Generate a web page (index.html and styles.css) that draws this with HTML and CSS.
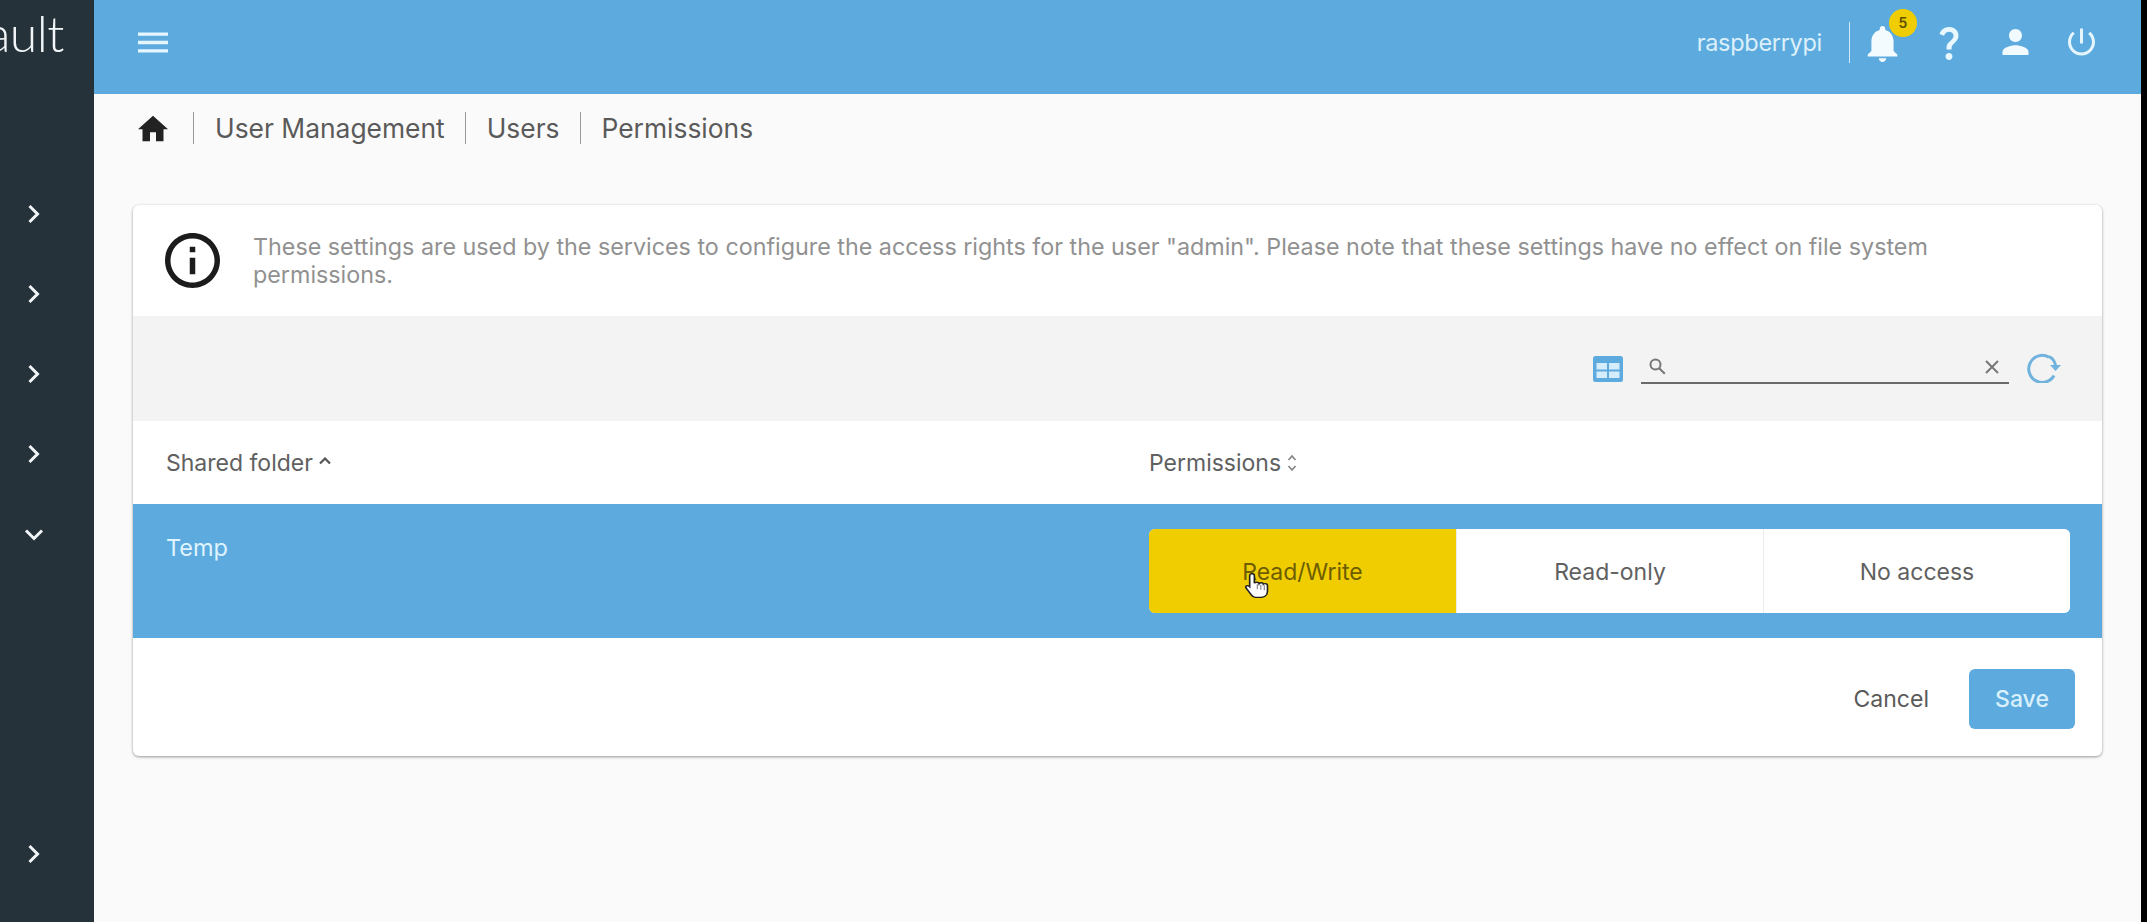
FILE: index.html
```html
<!DOCTYPE html>
<html lang="en">
<head>
<meta charset="utf-8">
<title>User Management | Users | Permissions</title>
<link rel="stylesheet" href="styles.css">
</head>
<body>
<div class="app">
  <aside class="sidebar">
    <div class="logo"><span class="logo-text">ault</span></div>
    <nav class="nav">
      <a class="nav-item"><svg class="chev" viewBox="0 0 14 22"><path d="M3 3l8 8-8 8"/></svg></a>
      <a class="nav-item"><svg class="chev" viewBox="0 0 14 22"><path d="M3 3l8 8-8 8"/></svg></a>
      <a class="nav-item"><svg class="chev" viewBox="0 0 14 22"><path d="M3 3l8 8-8 8"/></svg></a>
      <a class="nav-item"><svg class="chev" viewBox="0 0 14 22"><path d="M3 3l8 8-8 8"/></svg></a>
      <a class="nav-item"><svg class="chev-down" viewBox="0 0 22 14"><path d="M3 3l8 8 8-8"/></svg></a>
    </nav>
    <a class="nav-item nav-bottom"><svg class="chev" viewBox="0 0 14 22"><path d="M3 3l8 8-8 8"/></svg></a>
  </aside>
  <main class="main">
    <header class="topbar">
      <svg class="icon-menu" viewBox="3 6 18 12"><path d="M3 18h18v-2H3v2zm0-5h18v-2H3v2zm0-7v2h18V6H3z"/></svg>
      <div class="top-right">
        <span class="host">raspberrypi</span>
        <span class="top-sep"></span>
        <span class="bell">
          <svg class="icon-bell" viewBox="4 2.5 16 19.5"><path d="M12 22c1.1 0 2-.9 2-2h-4c0 1.1.89 2 2 2zm6-6v-5c0-3.07-1.64-5.64-4.5-6.32V4c0-.83-.67-1.5-1.5-1.5s-1.5.67-1.5 1.5v.68C7.63 5.36 6 7.92 6 11v5l-2 2v1h16v-1l-2-2z"/></svg>
          <span class="badge">5</span>
        </span>
        <svg class="icon-help" viewBox="6.5 3 11 19"><path d="M11.07 12.85c.77-1.39 2.25-2.21 3.11-3.44.91-1.29.4-3.7-2.18-3.7-1.69 0-2.52 1.28-2.87 2.34L6.54 6.96C7.25 4.83 9.18 3 11.99 3c2.35 0 3.96 1.07 4.78 2.41.7 1.15 1.11 3.3.03 4.9-1.2 1.77-2.35 2.31-2.97 3.45-.25.46-.35.76-.35 2.24h-2.89c-.01-.78-.13-2.05.48-3.15zM14 20c0 1.1-.9 2-2 2s-2-.9-2-2 .9-2 2-2 2 .9 2 2z"/></svg>
        <svg class="icon-user" viewBox="4 4 16 16"><path d="M12 12c2.21 0 4-1.79 4-4s-1.79-4-4-4-4 1.79-4 4 1.79 4 4 4zm0 2c-2.67 0-8 1.34-8 4v2h16v-2c0-2.66-5.33-4-8-4z"/></svg>
        <svg class="icon-power" viewBox="3 3 18 18"><path d="M13 3h-2v10h2V3zm4.83 2.17l-1.42 1.42C17.99 7.86 19 9.81 19 12c0 3.87-3.13 7-7 7s-7-3.13-7-7c0-2.19 1.01-4.14 2.58-5.42L6.17 5.17C4.23 6.82 3 9.26 3 12c0 4.97 4.03 9 9 9s9-4.03 9-9c0-2.74-1.23-5.18-3.17-6.83z"/></svg>
      </div>
    </header>
    <div class="crumbs">
      <svg class="icon-home" viewBox="2 3 20 17"><path d="M10 20v-6h4v6h5v-8h3L12 3 2 12h3v8z"/></svg>
      <span class="crumb">User Management</span>
      <span class="crumb">Users</span>
      <span class="crumb">Permissions</span>
    </div>
    <section class="card">
      <div class="info">
        <svg class="icon-info" viewBox="2 2 20 20"><path d="M11 7h2v2h-2zm0 4h2v6h-2zm1-9C6.48 2 2 6.48 2 12s4.48 10 10 10 10-4.48 10-10S17.52 2 12 2zm0 18c-4.41 0-8-3.59-8-8s3.59-8 8-8 8 3.59 8 8-3.59 8-8 8z"/></svg>
        <p class="info-text">These settings are used by the services to configure the access rights for the user "admin". Please note that these settings have no effect on file system permissions.</p>
      </div>
      <div class="toolbar">
        <svg class="icon-table" viewBox="0 0 30 26"><rect width="30" height="26" rx="2.5" class="table-bg"/><rect x="3.5" y="7" width="10.5" height="6.5" class="table-cell"/><rect x="16" y="7" width="10.5" height="6.5" class="table-cell"/><rect x="3.5" y="15.5" width="10.5" height="6.5" class="table-cell"/><rect x="16" y="15.5" width="10.5" height="6.5" class="table-cell"/></svg>
        <div class="search">
          <svg class="icon-search" viewBox="0 0 17 17"><circle cx="6.5" cy="6.5" r="5"/><path d="M10.2 10.2l5.6 5.6"/></svg>
          <svg class="icon-x" viewBox="0 0 14 14"><path d="M1 1l12 12M13 1L1 13"/></svg>
        </div>
        <svg class="icon-refresh" viewBox="0 0 36 30"><path class="ring" d="M29 22.5A13.5 13.5 0 1 1 24 4.2"/><path class="ring" d="M24 3.5c4 2 6 5.500 6.500 9"/><path class="tip" d="M25 12h11l-5.500 6z"/></svg>
      </div>
      <div class="row row-head">
        <div class="th">Shared folder <svg class="sort-up" viewBox="0 0 12 8"><path d="M1 6.500l5-5 5 5"/></svg></div>
        <div class="th th-perm">Permissions <svg class="sort-both" viewBox="0 0 10 20"><path d="M1.500 7l3.500-4 3.500 4M1.500 13l3.500 4 3.500-4"/></svg></div>
      </div>
      <div class="row row-sel">
        <div class="td-name">Temp</div>
        <div class="td-perm">
          <div class="segments">
            <button class="seg seg-on">Read/Write</button>
            <button class="seg">Read-only</button>
            <button class="seg">No access</button>
            <svg class="hand" viewBox="0.500 0 20.500 25.500" preserveAspectRatio="none"><path d="M4.500 2.500c0-2.300 4-2.300 4 0V10.500c.5-1.500 3.700-1.500 4 .3.600-1.300 3.500-1.100 3.700.6.800-1 3.500-.6 3.500 1.200v6c0 3.800-2.500 6.400-6.500 6.400h-2c-3 0-4.500-1-5.500-3L1.500 15.500c-1-2 1-3.800 3-1.500z"/><path class="hand-lines" d="M11 11.500v5M14 12v5M17 12.500v5"/></svg>
          </div>
        </div>
      </div>
      <div class="actions">
        <button class="btn-cancel">Cancel</button>
        <button class="btn-save">Save</button>
      </div>
    </section>
  </main>
  <div class="edge"></div>
</div>
</body>
</html>
```
FILE: styles.css
```css
* { box-sizing: border-box; }
html, body { margin: 0; height: 100%; overflow: hidden; }
body { font-family: Inter, "Liberation Sans", sans-serif; color: #555; background: #fafafa; }
.app { display: flex; height: 922px; }

.sidebar { width: 94px; flex: none; background: #25323a; display: flex; flex-direction: column; overflow: hidden; }
.logo { height: 94px; flex: none; padding-top: 3px; display: flex; justify-content: flex-end; padding-right: 30px; }
.logo-text { font-family: Lato, sans-serif; font-weight: 300; font-size: 50px; line-height: 60px; height: 60px; color: #f2f6f8; letter-spacing: -.5px; margin-left: -30px; white-space: nowrap; }
.nav { padding-top: 80px; }
.nav-item { height: 80px; display: flex; align-items: center; padding-left: 24px; }
.nav-bottom { margin-top: auto; margin-bottom: 28px; }
.chev { width: 15px; height: 22px; margin-left: 2px; }
.chev-down { width: 22px; height: 15px; margin-left: -1px; }
.chev path, .chev-down path { fill: none; stroke: #f2f6f8; stroke-width: 3; }

.main { flex: 1; min-width: 0; display: flex; flex-direction: column; }
.edge { width: 6px; flex: none; background: #000; }

.topbar { height: 94px; flex: none; background: #5dabde; display: flex; align-items: center; justify-content: space-between; padding: 0 46px 10px 44px; }
.icon-menu { width: 30px; height: 21px; fill: #e6f6ff; }
.top-right { display: flex; align-items: center; }
.host { font-size: 23.5px; color: #dcf0fb; letter-spacing: -.3px; }
.top-sep { width: 1px; height: 41px; background: #cfe6f6; margin: 0 17px 0 27px; }
.bell { position: relative; display: flex; }
.icon-bell { width: 31px; height: 36px; fill: #f4fbff; margin-top: 3px; }
.badge { position: absolute; left: 22px; top: -14px; width: 28px; height: 28px; border-radius: 50%; background: #f0cd00; color: #5f5000; font-size: 14px; font-weight: 600; display: flex; align-items: center; justify-content: center; }
.icon-help { width: 22px; height: 33px; fill: #e9f7ff; margin: 2px 0 0 40px; }
.icon-user { width: 29px; height: 26px; fill: #f0faff; margin-left: 41px; }
.icon-power { width: 27px; height: 28px; fill: #e6f6ff; margin-left: 38px; }

.crumbs { display: flex; align-items: center; height: 32px; margin: 18px 0 61px; padding-left: 44px; }
.icon-home { width: 30px; height: 29px; fill: #222; margin-right: 25px; }
.crumb { font-size: 26.4px; line-height: 32px; color: #5a5a5a; border-left: 1px solid #999; padding: 0 20px 0 21px; white-space: nowrap; }

.card { margin: 0 39px; background: #fff; border-radius: 6px; box-shadow: 0 1px 3px rgba(0,0,0,.4); overflow: hidden; }
.info { height: 111px; display: flex; align-items: center; padding: 0 60px 0 32px; }
.icon-info { width: 55px; height: 55px; flex: none; fill: #1c1c1c; margin-right: 33px; }
.info-text { margin: 0; font-size: 23.3px; line-height: 28px; color: #919191; }

.toolbar { height: 105px; background: #f3f3f3; display: flex; align-items: center; justify-content: flex-end; padding: 0 41px 0 0; }
.icon-table { width: 30px; height: 26px; margin-right: 18px; margin-top: 1px; }
.table-bg { fill: #5dabde; }
.table-cell { fill: #d5ecfb; }
.search { width: 368px; height: 38px; border-bottom: 2px solid #6a6a6a; display: flex; justify-content: space-between; align-items: center; padding: 6px 10px 0 8px; margin: -8px 16px 0 0; }
.icon-search { width: 17px; height: 17px; }
.icon-search circle, .icon-search path { fill: none; stroke: #777; stroke-width: 2; }
.icon-x { width: 14px; height: 14px; }
.icon-x path { fill: none; stroke: #777; stroke-width: 2; }
.icon-refresh { width: 36px; height: 30px; margin-top: -1px; }
.ring { fill: none; stroke: #6fb2de; stroke-width: 3; }
.tip { fill: #6fb2de; }

.row { display: grid; grid-template-columns: 983px 1fr; }
.row-head { height: 83px; align-items: center; }
.th { font-size: 23px; color: #606060; padding-left: 33px; display: flex; align-items: center; gap: 6px; }
.th-perm { padding-left: 33px; }
.sort-up { width: 12px; height: 8px; margin-top: -4px; }
.sort-up path { fill: none; stroke: #555; stroke-width: 2.2; }
.sort-both { width: 10px; height: 20px; }
.sort-both path { fill: none; stroke: #888; stroke-width: 1.8; }

.row-sel { height: 134px; background: #5dabde; }
.td-name { font-size: 23.5px; line-height: 28px; color: #dff3ff; padding: 30px 0 0 33px; }
.td-perm { padding: 25px 32px 25px 33px; }
.segments { position: relative; display: grid; grid-template-columns: repeat(3, 1fr); height: 84px; background: #fff; border-radius: 6px; overflow: hidden; }
.seg { border: 0; border-left: 1px solid #ececec; background: #fff; font: inherit; font-size: 23px; color: #606060; padding: 2px 0 0; }
.seg-on { background: #f0cd00; color: #6e5d00; border-left: 0; }
.hand { position: absolute; left: 96px; top: 44px; width: 24px; height: 25px; }
.hand path { fill: #fff; stroke: #222; stroke-width: 1.400; }
.hand .hand-lines { fill: none; stroke: #888; stroke-width: 1; }

.actions { height: 118px; display: flex; justify-content: flex-end; align-items: flex-start; padding: 31px 27px 0 0; gap: 40px; }
.btn-cancel { border: 0; background: none; padding: 0; height: 60px; font: inherit; font-size: 23px; color: #5a5a5a; }
.btn-save { border: 0; width: 106px; height: 60px; border-radius: 6px; background: #5dabde; color: #d9f0fd; font: inherit; font-size: 23px; font-weight: 500; }
```
